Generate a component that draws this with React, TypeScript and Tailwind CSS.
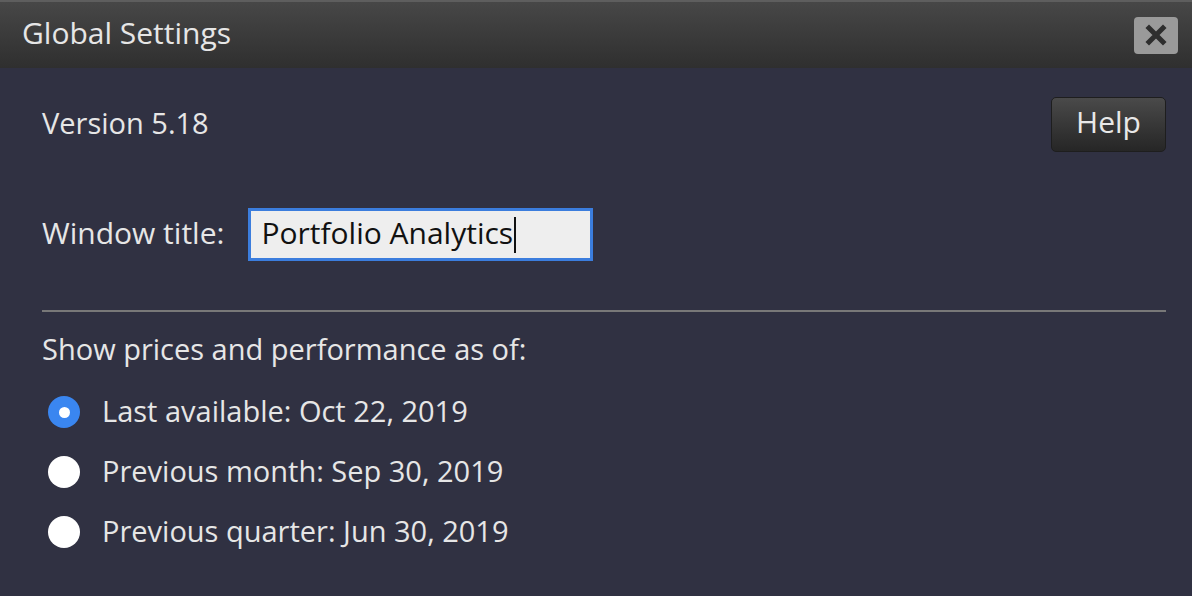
import { useState } from 'react';

const options = [
  { id: 'last', label: 'Last available: Oct 22, 2019' },
  { id: 'month', label: 'Previous month: Sep 30, 2019' },
  { id: 'quarter', label: 'Previous quarter: Jun 30, 2019' },
];

function Radio({ checked }: { checked: boolean }) {
  if (checked) {
    return (
      <span className="flex h-[32px] w-[32px] shrink-0 items-center justify-center rounded-full bg-[#3a86f0]">
        <span className="h-[11px] w-[11px] rounded-full bg-white" />
      </span>
    );
  }
  return <span className="h-[32px] w-[32px] shrink-0 rounded-full bg-white" />;
}

export default function App() {
  const [selected, setSelected] = useState('last');
  const title = 'Portfolio Analytics';

  return (
    <div
      className="flex h-[596px] w-[1192px] flex-col overflow-hidden bg-[#303142] text-[#e6e6e6]"
      style={{ fontFamily: '"Open Sans", Lato, sans-serif' }}
    >
      <div className="flex h-[68px] shrink-0 items-center justify-between border-t-2 border-[#5e5e5e] bg-gradient-to-b from-[#474747] to-[#2f2f2f] pl-[22px] pr-[14px]">
        <span className="-mt-[4px] text-[30px] leading-none">Global Settings</span>
        <button className="flex h-[37px] w-[44px] items-center justify-center rounded-[4px] bg-[#9a9a9a]">
          <svg width="22" height="22" viewBox="0 0 22 22">
            <path d="M4 4 L18 18 M18 4 L4 18" stroke="#2e2e2e" strokeWidth="5" strokeLinecap="square" />
          </svg>
        </button>
      </div>

      <div className="flex flex-1 flex-col px-[42px]">
        <div className="mt-[29px] flex h-[55px] items-center justify-between">
          <span className="-mt-[4px] text-[29px] leading-none">Version 5.18</span>
          <button className="-mr-[16px] flex h-[55px] w-[115px] items-center justify-center rounded-[5px] border border-[#1e1e1e] bg-gradient-to-b from-[#4a4a4a] to-[#262626] pb-[6px] text-[30px] leading-none text-[#e8e8e8]">
            Help
          </button>
        </div>

        <div className="mt-[56px] flex h-[53px] items-center gap-[24px]">
          <span className="-mt-[4px] text-[30px] leading-none">Window title:</span>
          <div className="flex h-[53px] w-[345px] items-center border-[3px] border-[#3b7ddd] bg-[#eeeeee] px-[10px] text-[#111]">
            <span className="-mt-[4px] text-[30px] leading-none">{title}</span>
            <span className="ml-[1px] h-[36px] w-[2px] bg-[#111]" />
          </div>
        </div>

        <div className="mt-[49px] h-[2px] w-[1124px] bg-[#787878]" />

        <div className="mt-[18px] flex h-[40px] items-center">
          <span className="-mt-[4px] text-[29px] leading-none">Show prices and performance as of:</span>
        </div>

        <div className="mt-[26px] flex flex-col gap-[28px]">
          {options.map((o) => (
            <label
              key={o.id}
              className="flex h-[32px] cursor-pointer items-center gap-[22px] pl-[6px]"
              onClick={() => setSelected(o.id)}
            >
              <Radio checked={selected === o.id} />
              <span className="-mt-[4px] text-[29px] leading-none">{o.label}</span>
            </label>
          ))}
        </div>
      </div>
    </div>
  );
}
